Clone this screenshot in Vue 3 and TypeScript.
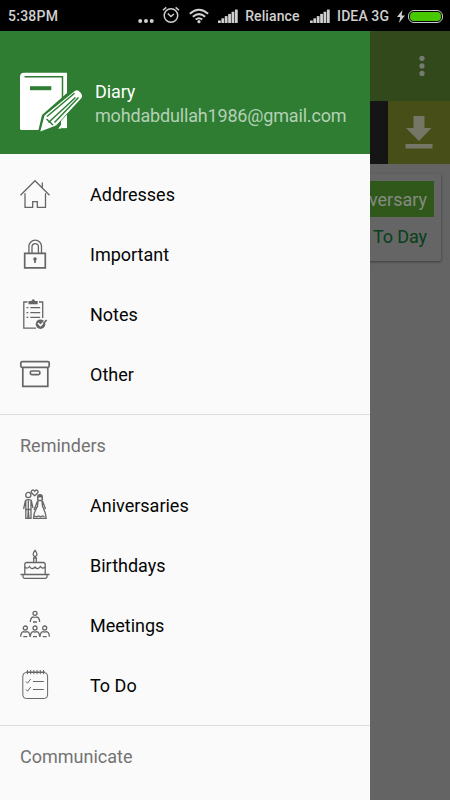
<script setup lang="ts">
interface Entry {
  id: string
  label: string
}

const pages: Entry[] = [
  { id: 'home', label: 'Addresses' },
  { id: 'lock', label: 'Important' },
  { id: 'notes', label: 'Notes' },
  { id: 'box', label: 'Other' },
]

const reminders: Entry[] = [
  { id: 'couple', label: 'Aniversaries' },
  { id: 'cake', label: 'Birthdays' },
  { id: 'people', label: 'Meetings' },
  { id: 'todo', label: 'To Do' },
]

const groups = [
  { title: '', entries: pages },
  { title: 'Reminders', entries: reminders },
]
const bars = [0, 1, 2, 3, 4, 5]
const seats = [5.3, 15, 24.7]
const rings = [10, 13.2, 16.4, 19.6, 22.8, 26]
</script>

<template>
  <div class="phone">
    <header class="status">
      <span class="clock">5:38PM</span>
      <svg class="dots" width="16" height="6" viewBox="0 0 16 6"><circle cx="2.2" cy="3" r="2" /><circle cx="8" cy="3" r="2" /><circle cx="13.8" cy="3" r="2" /></svg>
      <svg class="alarm" width="18" height="18" viewBox="0 0 18 18" fill="none" stroke="#d0d0d0" stroke-width="1.5">
        <circle cx="9" cy="9.5" r="6.8" /><path d="M5.8 7.5 9 10.5l3-2.5M1 4.2 4.3 1.3M17 4.2l-3.3-2.9" />
      </svg>
      <svg class="wifi" width="20" height="16" viewBox="0 0 20 16" fill="none" stroke="#d0d0d0" stroke-width="2">
        <path d="M.8 5.7Q10-2.3 19.2 5.7M3.8 8.8Q10 3.5 16.2 8.8M6.7 11.6Q10 8.9 13.3 11.6" /><circle cx="10" cy="13.7" r="1.6" fill="#d0d0d0" stroke="none" />
      </svg>
      <svg class="signal" width="20" height="14" viewBox="0 0 20 14"><rect v-for="b in bars" :key="b" :x="b * 3.4" :y="11.5 - b * 2.2" width="2.8" :height="2.5 + b * 2.2" /></svg>
      <span class="carrier first">Reliance</span>
      <svg class="signal" width="20" height="14" viewBox="0 0 20 14"><rect v-for="b in bars" :key="b" :x="b * 3.4" :y="11.5 - b * 2.2" width="2.8" :height="2.5 + b * 2.2" /></svg>
      <span class="carrier second">IDEA 3G</span>
      <svg class="bolt" width="8" height="13" viewBox="0 0 8 13"><path d="M5.5 0 0 7h3.300L2 13l6-7.500H4.600z" /></svg>
      <span class="battery"><i /></span>
    </header>

    <main class="screen">
      <div class="toolbar">
        <svg width="6" height="22" viewBox="0 0 6 22" fill="#757b70"><circle cx="3" cy="3.3" r="2.6" /><circle cx="3" cy="10.9" r="2.6" /><circle cx="3" cy="18.4" r="2.6" /></svg>
      </div>
      <div class="tabs">
        <div class="download">
          <svg width="28" height="34" viewBox="0 0 28 34" fill="#757666"><path d="M8.500 1h11v12h7L14 26 1 13h7.500zM.5 29h27v4.500H.5z" /></svg>
        </div>
      </div>
      <section class="card">
        <div class="tag">Anniversary</div>
        <div class="due">To Day</div>
      </section>
    </main>

    <nav class="drawer">
      <div class="profile">
        <svg width="64" height="60" viewBox="0 0 64 60">
          <path d="M4 .7h43V56L22 58H1.500Q0 58 0 56.500V5Q0 .7 4 .7z" fill="#fff" />
          <path d="M4.500 4.800H42.500V58" fill="none" stroke="#2e7d32" stroke-width="1.500" />
          <path d="M10 16.200h21.300" stroke="#2e7d32" stroke-width="4" />
          <path d="m18 60 4-17L55 14l10 8-20 25-9 13z" fill="#2e7d32" />
          <path d="M41 55v-6l6-6.500V56h-4.500z" fill="#fff" />
          <path d="M24.500 43.500 54.500 19.200Q57.300 17 60.200 20.200T61.500 26L36 53.500l-15.700 6z" fill="#fff" />
          <path d="M28.500 50.500 55.500 25.500M34.500 50.500l24-25M27 44.500 54.500 21.200" fill="none" stroke="#2e7d32" stroke-width="1.500" />
          <path d="m26.500 47 6.500 6" stroke="#2e7d32" stroke-width="1.500" />
        </svg>
        <div class="who">
          <strong>Diary</strong>
          <span>mohdabdullah1986@gmail.com</span>
        </div>
      </div>

      <section v-for="g in groups" :key="g.title" class="group">
        <h2 v-if="g.title">{{ g.title }}</h2>
        <ul>
          <li v-for="e in g.entries" :key="e.id">
            <svg class="icon" width="30" height="30" viewBox="0 0 30 30">
              <g v-if="e.id === 'home'">
                <path d="M.5 16.200 15 1.700l14.500 14.500M22.300 8.500V3.500M5 14.300v14h7.700V22.700h4.600v5.600H25.500v-14" />
              </g>
              <g v-else-if="e.id === 'lock'">
                <path class="bold" d="M4.700 14.300h20.600v14.500H4.700z" />
                <path d="M8.900 14V7.500a6.300 6.300 0 0 1 12.600 0V14M12 14V7.800a3.200 3.200 0 0 1 6.400 0V14" />
                <circle class="solid" cx="15" cy="20" r="1.800" /><path class="bold" d="M15 20v4" />
              </g>
              <g v-else-if="e.id === 'notes'">
                <path d="M7.500 3H3.800v26.200H16M19 3h3.700v16" />
                <path class="solid" d="M8.500 2h3q.3-1.800 1.700-1.800T15 2h2.700v3.300H8.500z" />
                <path d="M6.500 8.700h1.800M10.300 8.700h9.900M6.500 13.600h1.800M10.300 13.600h9.900M6.500 18.300h1.800M10.300 18.300h9.900" />
                <circle class="solid" cx="20.500" cy="25.200" r="4.800" />
                <path class="cut" d="m18 24 2.500 2.500 5-5.200" /><path class="bold" d="m23.300 24.600 3.300-3.600" />
              </g>
              <g v-else-if="e.id === 'box'" class="heavy">
                <rect x=".8" y="2.700" width="28.400" height="5.600" rx="1.300" /><path d="M2.800 8.500v18.800h25V8.500" /><rect x="10.300" y="12" width="9.600" height="3.600" rx="1.500" />
              </g>
              <g v-else-if="e.id === 'couple'">
                <circle cx="8.300" cy="5" r="2.600" />
                <path d="M5.500 10.300q3-1.500 5.700 0L13 18M5.500 10.300 3.600 19M5.800 11v17.300h2L8.300 20l.7 8.300h2V11M8.300 10.500v9M5.500 19.500H11" />
                <path d="M14.700 5.800Q9.800 2.200 11.900.5q1.700-1.300 2.800.8 1.100-2.100 2.800-.8 2.100 1.700-2.800 5.300z" />
                <path class="solid" d="M17 10V7q0-3 3-3t3 3v3h-1.500V7.500h-3V10z" />
                <path d="M18 10.500h4l.5 6q3 5 3.700 11.800H13.500q.5-7 4-11.800zM17.500 11l-3.500 9M22.500 11l3 8M14.500 26l2 .8 2-.8 2 .8 2-.8 2 .8" />
              </g>
              <g v-else-if="e.id === 'cake'">
                <path d="M15 .3q4 4.700 0 6.500Q11.200 5 15 .3zM13.700 12V8h2.600v4M4.800 24V14.500q0-2 2-2h16.400q2 0 2 2V24" />
                <path d="M4.800 17q2.500 2.500 4.600-.5 2.500 4 5.600.5 2.800 3.500 5.300-.5 2.400 3 4.900.5M.5 24.500h29M3 24.500v2.300q0 1.500 1.500 1.500h21q1.500 0 1.500-1.500v-2.300" />
              </g>
              <g v-else-if="e.id === 'people'">
                <circle cx="15" cy="3.300" r="2" /><path d="M10.300 12q.4-4.700 3-5 1.700.8 3.400 0 2.600.3 3 5M13 12h4" />
                <g v-for="x in seats" :key="x" :transform="`translate(${x} 14.700)`">
                  <circle cx="0" cy="3.300" r="2" /><path d="M-4.700 12q.4-4.700 3-5 1.700.8 3.400 0 2.600.3 3 5M-2 12h4" />
                </g>
              </g>
              <g v-else class="light">
                <rect x="2.800" y="2.500" width="24.800" height="26" rx="3.500" />
                <path v-for="x in rings" :key="x" :d="`M${x - 2.5} 0v4.200`" /><path d="M6 2h19M6 11.500l1.500 1.700L10.700 9M6 19.500l1.500 1.700L10.700 17M13 11.500h10.800M13 19.500h10.800" />
              </g>
            </svg>
            <span>{{ e.label }}</span>
          </li>
        </ul>
      </section>
      <section class="group"><h2>Communicate</h2></section>
    </nav>
  </div>
</template>

<style>
body { margin: 0; overflow: hidden; }
</style>

<style scoped>
.phone { position: relative; width: 450px; height: 800px; overflow: hidden; display: flex; flex-direction: column; font-family: Roboto, sans-serif; background: #646464; }
.status { height: 31px; flex: none; box-sizing: border-box; padding: 1px 7px 0 8px; display: flex; align-items: center; background: #000; color: #d0d0d0; fill: #d0d0d0; font-size: 14px; font-weight: 500; white-space: nowrap; }
.clock { width: 131px; letter-spacing: .25px; }
.dots { margin-top: 9px; }
.alarm { margin-left: 8px; margin-top: -2px; }
.wifi { margin-left: 9px; margin-top: -1px; }
.signal { margin-left: 9px; }
.carrier { margin-left: 7px; flex: none; letter-spacing: .1px; }
.first { width: 56px; }
.second { width: 53px; }
.bolt { margin-left: 7px; margin-right: 3px; }
.battery { box-sizing: border-box; width: 35px; height: 13px; padding: 1px; flex: none; border: 1.5px solid #ccc; border-radius: 6px; display: flex; }
.battery i { flex: 1; border-radius: 4px; background: #48c800; }
.screen { flex: 1; display: flex; flex-direction: column; }
.toolbar { height: 70px; display: flex; align-items: center; justify-content: flex-end; padding-right: 25px; background: #31491b; }
.tabs { height: 63px; display: flex; justify-content: flex-end; background: #151515; }
.download { width: 62px; display: flex; align-items: center; justify-content: center; background: #484e18; }
.download svg { margin-top: -1px; }
.card { margin: 10px 9px 0; height: 87px; padding: 7px 7px 0; box-sizing: border-box; border-radius: 2px; background: #656565; box-shadow: 0 1px 3px rgba(0, 0, 0, .4); font-size: 18px; text-align: right; }
.tag { height: 36px; line-height: 38px; padding-right: 7px; background: #30581b; color: #858b80; }
.due { line-height: 39px; padding-right: 7px; color: #07401a; letter-spacing: -.1px; }
.drawer { position: absolute; top: 31px; left: 0; bottom: 0; width: 370px; overflow: hidden; background: #fafafa; }
.profile { height: 123px; box-sizing: border-box; padding: 41px 0 0 20px; display: flex; align-items: flex-start; gap: 11px; background: #2e7d32; color: #fff; }
.who { display: flex; flex-direction: column; margin-top: 8px; line-height: 24px; font-size: 18px; white-space: nowrap; }
.who strong { font-weight: 400; letter-spacing: -.1px; }
.who span { color: #b5d0b5; letter-spacing: -.17px; }
.group { padding: 10px 0; border-bottom: 1px solid #dcdcdc; }
.group:last-child { border: 0; }
.group h2 { margin: 0; height: 52px; line-height: 46px; padding-left: 20px; color: #737373; font-size: 18px; font-weight: 400; letter-spacing: 0; }
.group:has(h2) { padding-top: 8px; }
ul { margin: 0; padding: 0; list-style: none; }
li { height: 60px; display: flex; align-items: center; gap: 40px; padding-left: 20px; color: #050505; font-size: 18px; letter-spacing: 0; }
.icon { overflow: visible; fill: none; stroke: #666; stroke-width: 1.3; }
.icon .bold { stroke-width: 1.7; }
.heavy { stroke-width: 1.7; }
.light { stroke-width: 1; }
.icon .solid { fill: #666; stroke: none; }
.icon .cut { stroke: #fafafa; stroke-width: 1.7; }
</style>
